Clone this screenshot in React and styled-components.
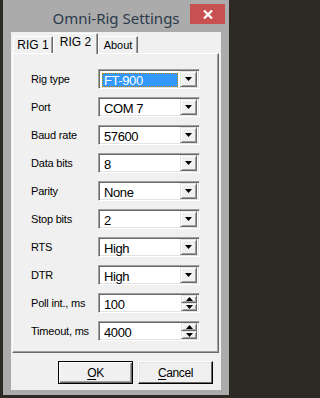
import styled, { createGlobalStyle } from 'styled-components'

const GlobalStyle = createGlobalStyle`
    html, body {
        margin: 0;
        padding: 0;
        background: #2d2a25;
        overflow: hidden;
    }
    * {
        box-sizing: border-box;
    }
`

const rows = [
    { label: 'Rig type', value: 'FT-900', kind: 'combo', selected: true },
    { label: 'Port', value: 'COM 7', kind: 'combo' },
    { label: 'Baud rate', value: '57600', kind: 'combo' },
    { label: 'Data bits', value: '8', kind: 'combo' },
    { label: 'Parity', value: 'None', kind: 'combo' },
    { label: 'Stop bits', value: '2', kind: 'combo' },
    { label: 'RTS', value: 'High', kind: 'combo' },
    { label: 'DTR', value: 'High', kind: 'combo' },
    { label: 'Poll int., ms', value: '100', kind: 'spin' },
    { label: 'Timeout, ms', value: '4000', kind: 'spin' },
]

const tabs = [
    { title: 'RIG 1', width: 40 },
    { title: 'RIG 2', width: 45, active: true },
    { title: 'About', width: 40, small: true },
]

const DownArrow = () => (
    <svg width="7" height="4" viewBox="0 0 7 4">
        <path d="M0 0h7L3.5 4z" fill="#000" />
    </svg>
)

const UpArrow = () => (
    <svg width="7" height="4" viewBox="0 0 7 4">
        <path d="M0 4h7L3.5 0z" fill="#000" />
    </svg>
)

export default function App() {
    return (
        <>
            <GlobalStyle />
            <Window>
                <TitleBar>
                    <span />
                    <Title>Omni-Rig Settings</Title>
                    <CloseButton>
                        <svg width="10" height="9" viewBox="0 0 10 9">
                            <path d="M1 0.5l8 8M9 0.5l-8 8" stroke="#fff" strokeWidth="2.2" />
                        </svg>
                    </CloseButton>
                </TitleBar>
                <Client>
                    <TabStrip>
                        {tabs.map(t => (
                            <Tab key={t.title} $active={t.active} $small={t.small} $width={t.width}>
                                {t.title}
                            </Tab>
                        ))}
                    </TabStrip>
                    <Panel>
                        {rows.map(r => (
                            <Row key={r.label}>
                                <Label>{r.label}</Label>
                                <Field>
                                    <FieldText $selected={r.selected}>{r.value}</FieldText>
                                    {r.kind === 'combo' ? (
                                        <DropButton><DownArrow /></DropButton>
                                    ) : (
                                        <SpinButtons>
                                            <SpinHalf><UpArrow /></SpinHalf>
                                            <SpinHalf><DownArrow /></SpinHalf>
                                        </SpinButtons>
                                    )}
                                </Field>
                            </Row>
                        ))}
                    </Panel>
                    <ButtonRow>
                        <PushButton $default><u>O</u>K</PushButton>
                        <PushButton><u>C</u>ancel</PushButton>
                    </ButtonRow>
                </Client>
            </Window>
        </>
    )
}

const Window = styled.div`
    margin-left: 3px;
    width: 226px;
    height: 395px;
    background: #ababab;
    padding: 0 8px 5px 8px;
    display: flex;
    flex-direction: column;
`

const TitleBar = styled.div`
    height: 32px;
    margin: 0 -8px;
    padding: 0 4px 0 4px;
    display: grid;
    grid-template-columns: 1fr auto 1fr;
    align-items: start;
`

const Title = styled.div`
    font-family: "Noto Sans", "Open Sans", sans-serif;
    font-size: 15px;
    color: #2b3a4b;
    line-height: 20px;
    margin-top: 8px;
    white-space: nowrap;
`

const CloseButton = styled.div`
    justify-self: end;
    margin-top: 4px;
    width: 35px;
    height: 20px;
    background: #c75050;
    display: flex;
    align-items: center;
    justify-content: center;
`

const Client = styled.div`
    flex: 1;
    background: #f0f0f0;
    display: flex;
    flex-direction: column;
    padding: 0 2px 6px 1px;
`

const TabStrip = styled.div`
    height: 21px;
    padding-left: 1px;
    display: flex;
    align-items: flex-end;
    position: relative;
    z-index: 1;
`

const Tab = styled.div`
    width: ${p => p.$width}px;
    height: ${p => (p.$active ? 21 : 17)}px;
    margin-bottom: ${p => (p.$active ? -1 : 0)}px;
    background: #f0f0f0;
    border-top: 1px solid #fff;
    border-left: 1px solid #fff;
    border-right: 1px solid #696969;
    box-shadow: inset -1px 0 #a0a0a0;
    font-family: "Liberation Sans", Arial, sans-serif;
    font-size: ${p => (p.$small ? 11 : 12)}px;
    color: #000;
    display: flex;
    justify-content: center;
    padding-top: 2px;
    line-height: 13px;
`

const Panel = styled.div`
    height: 300px;
    border-top: 1px solid #fff;
    border-left: 1px solid #fff;
    border-right: 1px solid #696969;
    border-bottom: 1px solid #696969;
    box-shadow: inset -1px -1px #a0a0a0;
    padding: 15px 0 0 18px;
    display: flex;
    flex-direction: column;
    gap: 8px;
`

const Row = styled.div`
    display: grid;
    grid-template-columns: 67px 102px;
    align-items: center;
    height: 20px;
`

const Label = styled.div`
    font-family: "Liberation Sans", Arial, sans-serif;
    font-size: 11px;
    letter-spacing: -0.2px;
    color: #000;
`

const Field = styled.div`
    height: 20px;
    background: #fff;
    border-top: 1px solid #a0a0a0;
    border-left: 1px solid #a0a0a0;
    border-right: 1px solid #fff;
    border-bottom: 1px solid #fff;
    box-shadow: inset 1px 1px #696969, inset -1px -1px #e3e3e3;
    padding: 2px 2px 1px 2px;
    display: flex;
    gap: 1px;
`

const FieldText = styled.div`
    flex: 1;
    font-family: "Liberation Sans", Arial, sans-serif;
    font-size: 13px;
    letter-spacing: -0.4px;
    line-height: 15px;
    padding-left: 2px;
    color: ${p => (p.$selected ? '#fff' : '#000')};
    background: ${p => (p.$selected ? '#3399ff' : 'transparent')};
    outline: ${p => (p.$selected ? '1px dotted #c08000' : 'none')};
    outline-offset: -1px;
    margin: 1px 1px 0 1px;
`

const raised = `
    background: #f0f0f0;
    border-top: 1px solid #e3e3e3;
    border-left: 1px solid #e3e3e3;
    border-right: 1px solid #696969;
    border-bottom: 1px solid #696969;
    box-shadow: inset 1px 1px #fff, inset -1px -1px #a0a0a0;
`

const DropButton = styled.div`
    ${raised}
    width: 17px;
    height: 16px;
    margin-top: -1px;
    display: flex;
    align-items: center;
    justify-content: center;
`

const SpinButtons = styled.div`
    width: 16px;
    height: 16px;
    margin-top: -1px;
    display: flex;
    flex-direction: column;
`

const SpinHalf = styled.div`
    ${raised}
    flex: 1;
    display: flex;
    align-items: center;
    justify-content: center;
`

const ButtonRow = styled.div`
    margin-top: auto;
    display: flex;
    justify-content: flex-end;
    gap: 5px;
    padding-right: 6px;
`

const PushButton = styled.div`
    width: 75px;
    height: 23px;
    background: #f0f0f0;
    border: 1px solid ${p => (p.$default ? '#000' : '#fff')};
    border-right-color: #000;
    border-bottom-color: #000;
    box-shadow: ${p => (p.$default
        ? 'inset 1px 1px #fff, inset -1px -1px #696969, inset -2px -2px #a0a0a0'
        : 'inset -1px -1px #696969, inset 1px 1px #e3e3e3')};
    font-family: "Liberation Sans", Arial, sans-serif;
    font-size: 12px;
    letter-spacing: -0.4px;
    color: #000;
    display: flex;
    align-items: center;
    justify-content: center;

    u {
        text-decoration-thickness: 1px;
        text-underline-offset: 2px;
    }
`
